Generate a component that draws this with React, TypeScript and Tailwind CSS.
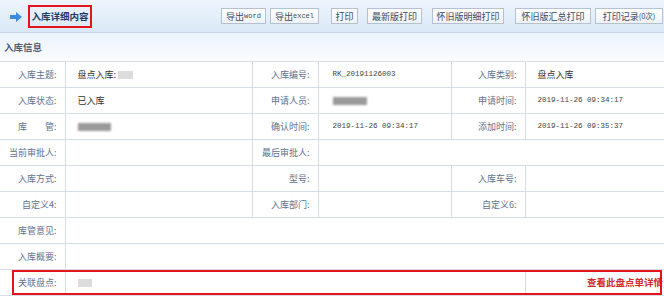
const cn = "font-['Noto_Sans_CJK_SC','Noto_Sans',sans-serif]";
const mono = "font-['Liberation_Mono',monospace]";

function Btn({ children, className = "" }: { children: React.ReactNode; className?: string }) {
  return (
    <div
      className={`h-[16px] flex items-center justify-center border border-[#b3c1d1] bg-gradient-to-b from-white to-[#eef2f6] text-[9px] leading-none text-[#3c4a5c] ${className}`}
    >
      {children}
    </div>
  );
}

function Label({ children }: { children: React.ReactNode }) {
  return (
    <td className="border-y border-r border-[#d6dde6] pr-[8px] text-right text-[9px] text-[#5f7290] whitespace-nowrap">
      {children}
    </td>
  );
}

function Val({
  children,
  colSpan,
  num,
  last,
  wide,
}: {
  children?: React.ReactNode;
  colSpan?: number;
  num?: boolean;
  last?: boolean;
  wide?: boolean;
}) {
  const font = num ? `${mono} text-[7.5px] text-[#444]` : "text-[9px] text-[#333]";
  return (
    <td
      colSpan={colSpan}
      className={`border-y border-[#d6dde6] whitespace-nowrap ${font} ${last ? "" : "border-r"} ${wide ? "pl-[14px]" : "pl-[12px]"}`}
    >
      {children}
    </td>
  );
}

function Blur({ w, dark }: { w: number; dark?: boolean }) {
  return (
    <span
      className={`inline-block h-[8px] align-middle ${dark ? "bg-[#9a9a9a] blur-[1px]" : "bg-[#dcdcdc]"}`}
      style={{ width: w }}
    />
  );
}

export default function App() {
  return (
    <div className={`w-[664px] h-[297px] overflow-hidden bg-white ${cn}`}>
      {/* top bar */}
      <div className="h-[33px] flex items-center border-b border-[#c9d5e2] bg-gradient-to-b from-[#eef5fc] to-[#d9e8f7]">
        <svg width="12" height="10" viewBox="0 0 12 10" className="ml-[10px] mt-[1px]">
          <polygon points="0,3 6,3 6,0 12,5 6,10 6,7 0,7" fill="#3a8be0" />
        </svg>
        <div className="ml-[6px] h-[23px] w-[64px] flex items-center justify-center border-2 border-[#e3141a] text-[9.5px] font-bold text-[#1e3a68]">
          入库详细内容
        </div>
        <div className="ml-auto flex items-center">
          <Btn className="w-[45px]">
            导出<span className={`${mono} text-[7px]`}>word</span>
          </Btn>
          <Btn className="ml-[4px] w-[49px]">
            导出<span className={`${mono} text-[7px]`}>excel</span>
          </Btn>
          <Btn className="ml-[12px] w-[27px]">打印</Btn>
          <Btn className="ml-[9px] w-[55px]">最新版打印</Btn>
          <Btn className="ml-[10px] w-[72px]">怀旧版明细打印</Btn>
          <Btn className="ml-[11px] w-[76px]">怀旧版汇总打印</Btn>
          <Btn className="ml-[4px] mr-[1px] w-[68px]">
            打印记录<span className="text-[7.5px]">(0次)</span>
          </Btn>
        </div>
      </div>

      {/* section title */}
      <div className="h-[28px] flex items-center pl-[4px] bg-gradient-to-b from-[#eaf2fb] to-[#fbfdff] text-[9.5px] font-bold text-[#4d5d72]">
        入库信息
      </div>

      <div className="relative">
        <table className="w-[664px] table-fixed border-collapse">
          <colgroup>
            <col className="w-[65px]" />
            <col className="w-[187px]" />
            <col className="w-[66px]" />
            <col className="w-[133px]" />
            <col className="w-[74px]" />
            <col className="w-[139px]" />
          </colgroup>
          <tbody>
            <tr className="h-[26px]">
              <Label>入库主题:</Label>
              <Val>
                盘点入库: <Blur w={15} />
              </Val>
              <Label>入库编号:</Label>
              <Val num wide>RK_20191126003</Val>
              <Label>入库类别:</Label>
              <Val last>盘点入库</Val>
            </tr>
            <tr className="h-[26px]">
              <Label>入库状态:</Label>
              <Val>已入库</Val>
              <Label>申请人员:</Label>
              <Val wide>
                <Blur w={34} dark />
              </Val>
              <Label>申请时间:</Label>
              <Val num last>2019-11-26 09:34:17</Val>
            </tr>
            <tr className="h-[26px]">
              <Label>库　　管:</Label>
              <Val>
                <Blur w={33} dark />
              </Val>
              <Label>确认时间:</Label>
              <Val num wide>2019-11-26 09:34:17</Val>
              <Label>添加时间:</Label>
              <Val num last>2019-11-26 09:35:37</Val>
            </tr>
            <tr className="h-[26px]">
              <Label>当前审批人:</Label>
              <Val />
              <Label>最后审批人:</Label>
              <Val colSpan={3} last />
            </tr>
            <tr className="h-[26px]">
              <Label>入库方式:</Label>
              <Val />
              <Label>型号:</Label>
              <Val />
              <Label>入库车号:</Label>
              <Val last />
            </tr>
            <tr className="h-[26px]">
              <Label>自定义4:</Label>
              <Val />
              <Label>入库部门:</Label>
              <Val />
              <Label>自定义6:</Label>
              <Val last />
            </tr>
            <tr className="h-[26px]">
              <Label>库管意见:</Label>
              <Val colSpan={5} last />
            </tr>
            <tr className="h-[26px]">
              <Label>入库概要:</Label>
              <Val colSpan={5} last />
            </tr>
            <tr className="h-[26px]">
              <Label>关联盘点:</Label>
              <Val colSpan={4}>
                <Blur w={14} />
              </Val>
              <td className="border-y border-[#d6dde6] pr-[1px] text-right text-[9.5px] font-bold text-[#d42a2e] whitespace-nowrap">
                查看此盘点单详情
              </td>
            </tr>
          </tbody>
        </table>
        {/* highlight frame over the last row */}
        <div className="absolute left-[12px] right-[2px] top-[209px] h-[25px] border-2 border-[#e3141a] pointer-events-none" />
      </div>
    </div>
  );
}
